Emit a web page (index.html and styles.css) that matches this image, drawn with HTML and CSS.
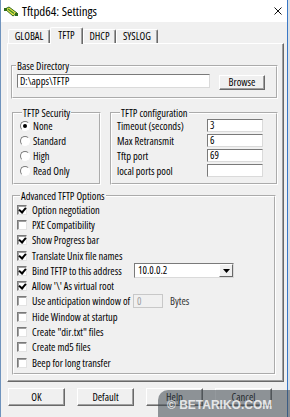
FILE: index.html
```html
<!DOCTYPE html>
<html>
<head>
<meta charset="utf-8">
<link rel="stylesheet" href="styles.css">
<title>Tftpd64: Settings</title>
</head>
<body>
<div class="win">
  <div class="titlebar">
    <svg class="appicon" width="14" height="11" viewBox="0 0 14 11">
      <polygon points="1,3 5,1 13,7 9,10" fill="#e6e04a" stroke="#2f6b1c" stroke-width="1"/>
      <line x1="4" y1="3" x2="10" y2="7.5" stroke="#3d8f26" stroke-width="1.5"/>
      <rect x="0" y="2" width="3" height="3" fill="#2f6b1c"/>
      <rect x="11" y="7" width="3" height="3" fill="#2f6b1c"/>
    </svg>
    <span class="title">Tftpd64: Settings</span>
    <svg class="close" width="8" height="8" viewBox="0 0 8 8">
      <path d="M0.5 0.5 L7.5 7.5 M7.5 0.5 L0.5 7.5" stroke="#111" stroke-width="1"/>
    </svg>
  </div>

  <div class="tabs">
    <div class="tab wide">GLOBAL</div>
    <div class="tab sel">TFTP</div>
    <div class="tab">DHCP</div>
    <div class="tab wide">SYSLOG</div>
  </div>

  <div class="panel">
    <fieldset class="grp base">
      <legend>Base Directory</legend>
      <div class="dirrow">
        <div class="edit dir">D:\apps\TFTP</div>
        <div class="btn browse">Browse</div>
      </div>
    </fieldset>

    <div class="pair">
      <fieldset class="grp sec">
        <legend>TFTP Security</legend>
        <div class="list">
          <div class="opt"><span class="radio on"></span><span class="txt">None</span></div>
          <div class="opt"><span class="radio"></span><span class="txt">Standard</span></div>
          <div class="opt"><span class="radio"></span><span class="txt">High</span></div>
          <div class="opt"><span class="radio"></span><span class="txt">Read Only</span></div>
        </div>
      </fieldset>
      <fieldset class="grp conf">
        <legend>TFTP configuration</legend>
        <div class="list">
          <div class="opt"><span class="lbl">Timeout (seconds)</span><span class="edit num">3</span></div>
          <div class="opt"><span class="lbl">Max Retransmit</span><span class="edit num">6</span></div>
          <div class="opt"><span class="lbl">Tftp port</span><span class="edit num">69</span></div>
          <div class="opt"><span class="lbl">local ports pool</span><span class="edit num"></span></div>
        </div>
      </fieldset>
    </div>

    <fieldset class="grp adv">
      <legend>Advanced TFTP Options</legend>
      <div class="list">
        <div class="opt"><span class="chk on"></span><span class="txt">Option negotiation</span></div>
        <div class="opt"><span class="chk"></span><span class="txt">PXE Compatibility</span></div>
        <div class="opt"><span class="chk on"></span><span class="txt">Show Progress bar</span></div>
        <div class="opt"><span class="chk on"></span><span class="txt">Translate Unix file names</span></div>
        <div class="opt"><span class="chk on"></span><span class="txt fix">Bind TFTP to this address</span>
          <div class="combo"><span class="val">10.0.0.2</span><span class="drop"><svg width="7" height="4" viewBox="0 0 7 4"><polygon points="0,0 7,0 3.5,4" fill="#000"/></svg></span></div>
        </div>
        <div class="opt"><span class="chk on"></span><span class="txt">Allow '\' As virtual root</span></div>
        <div class="opt"><span class="chk"></span><span class="txt fix2">Use anticipation window of</span><span class="edit off">0</span><span class="unit">Bytes</span></div>
        <div class="opt"><span class="chk"></span><span class="txt">Hide Window at startup</span></div>
        <div class="opt"><span class="chk"></span><span class="txt">Create "dir.txt" files</span></div>
        <div class="opt"><span class="chk"></span><span class="txt">Create md5 files</span></div>
        <div class="opt"><span class="chk"></span><span class="txt">Beep for long transfer</span></div>
      </div>
    </fieldset>
  </div>

  <div class="buttons">
    <div class="btn">OK</div>
    <div class="btn">Default</div>
    <div class="btn">Help</div>
    <div class="btn">Cancel</div>
  </div>
</div>
<div class="mark">© BETARIKO.COM</div>
</body>
</html>
```

FILE: styles.css
```css
*{margin:0;padding:0;box-sizing:border-box;}
body{width:290px;height:417px;overflow:hidden;position:relative;background:#dde1e6;font-family:"Open Sans","Liberation Sans",Arial,sans-serif;font-stretch:75%;font-size:10.5px;color:#000;white-space:nowrap;}
.win{width:288px;height:417px;background:#f0f0f0;border-left:1px solid #6f93bd;border-right:1px solid #3a78c6;}

/* title bar */
.titlebar{height:22px;background:#fff;display:flex;align-items:center;}
.appicon{margin-left:3px;}
.title{margin-left:4px;font-size:13px;line-height:15px;}
.close{margin-left:auto;margin-right:5px;}

/* tabs */
.tabs{display:flex;align-items:flex-end;height:16px;margin-top:5px;padding-left:7px;}
.tab{width:33px;height:14px;border:1px solid;border-bottom:0;border-color:#fff #696969 #fff #fff;box-shadow:inset -1px 0 #a0a0a0;border-radius:2px 2px 0 0;text-align:center;line-height:13px;}
.tab.wide{width:42px;}
.tab.sel{height:17px;margin-bottom:-1px;position:relative;z-index:1;background:#f0f0f0;line-height:15px;}

.panel{margin-left:6px;width:277px;border:1px solid;border-color:#fff #696969 #696969 #fff;box-shadow:inset -1px -1px #a0a0a0;padding:16px 0 6px 3px;}

/* group boxes */
.grp{border:2px groove #fff;}
.grp legend{margin-left:3px;padding:0 1px;line-height:12px;}
.base{width:267px;}
.dirrow{display:flex;align-items:flex-start;margin-top:2px;padding:0 0 7px 4px;}
.edit{background:#fff;border:1px solid;border-color:#7a7a7a #dadada #dadada #7a7a7a;padding-left:2px;line-height:12px;}
.dir{width:193px;height:14px;}
.browse{width:46px;height:15px;margin:1px 0 0 9px;line-height:13px;}

.pair{display:flex;gap:9px;margin:8px 0 0 1px;}
.sec{width:89px;padding:0 0 5px 5px;}
.conf{width:168px;padding:0 13px 5px 5px;}
.list{margin-top:-1px;}
.opt{display:flex;align-items:center;height:15px;}
.lbl{flex:1;}
.num{width:56px;height:13px;line-height:11px;}

.radio{width:10px;height:10px;border-radius:50%;background:#fff;border:1px solid;border-color:#7a7a7a #fff #fff #7a7a7a;display:flex;align-items:center;justify-content:center;margin-left:1px;}
.radio.on::after{content:"";width:4px;height:4px;border-radius:50%;background:#000;}
.sec .txt{margin-left:3px;}

.adv{width:264px;margin:5px 0 0 1px;padding:0 0 3px 3px;}
.adv .list{margin-top:0;}
.adv .opt{height:15.3px;}
.chk{width:10px;height:10px;background:#fff;border:1px solid;border-color:#7a7a7a #e3e3e3 #e3e3e3 #7a7a7a;box-shadow:inset 1px 1px #a0a0a0;position:relative;flex:none;}
.chk.on::after{content:"";position:absolute;left:2px;top:0px;width:3px;height:5px;border:solid #000;border-width:0 2px 2px 0;transform:rotate(40deg);}
.adv .txt{margin-left:5px;}
.txt.fix{width:102px;}
.txt.fix2{width:101px;}
.combo{display:flex;width:100px;height:15px;background:#fff;border:1px solid;border-color:#7a7a7a #dadada #dadada #7a7a7a;}
.combo .val{flex:1;padding-left:3px;line-height:13px;}
.drop{width:14px;height:13px;background:#f0f0f0;border:1px solid;border-color:#fff #696969 #696969 #fff;display:flex;align-items:center;justify-content:center;}
.edit.off{width:30px;height:14px;background:#f0f0f0;border-color:#c8c8c8;color:#a0a0a0;padding-left:3px;}
.unit{margin-left:7px;color:#333;}

/* buttons */
.btn{background:#f0f0f0;border:1px solid;border-color:#fff #696969 #696969 #fff;box-shadow:inset -1px -1px #a0a0a0;text-align:center;}
.buttons{display:flex;gap:12px;margin:6px 0 0 7px;}
.buttons .btn{width:57px;height:18px;line-height:16px;}

.mark{position:absolute;left:158px;top:390px;width:132px;height:27px;background:rgba(60,70,76,0.55);border-top-left-radius:10px;padding:8px 0 0 9px;font-family:"Liberation Sans",Arial,sans-serif;font-stretch:normal;font-weight:bold;font-size:12px;line-height:14px;color:rgba(255,255,255,0.8);}
```
